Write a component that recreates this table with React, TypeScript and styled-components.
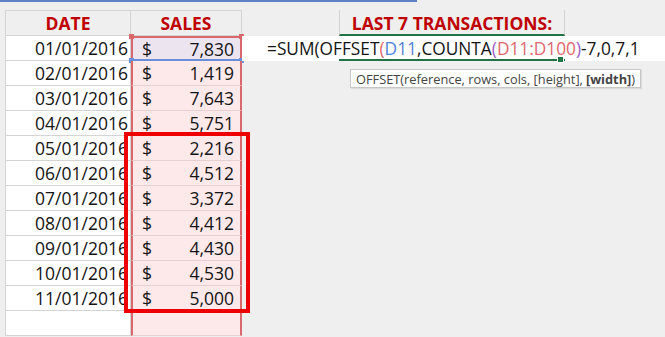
import React from 'react';
import styled, { createGlobalStyle } from 'styled-components';

const GlobalStyle = createGlobalStyle`
  html, body {
    margin: 0;
    padding: 0;
    background: #efefef;
  }
  body {
    font-family: 'Open Sans', 'Liberation Sans', sans-serif;
  }
`;

const grid = '#d4d4d4';
const rangeRed = '#d9686c';
const rangeBlue = '#6a8fd9';
const excelGreen = '#217346';

const Page = styled.div`
  position: relative;
  width: 665px;
  height: 337px;
  overflow: hidden;
  background: #efefef;
`;

const TopAccent = styled.div`
  width: 417px;
  height: 2px;
  background: #5d82c4;
`;

const Sheet = styled.div`
  display: grid;
  grid-template-columns: 126px 111px 97px 226px 1fr;
  grid-template-rows: 26px repeat(12, 25px);
  margin: 8px 0 0 5px;
  font-size: 17.5px;
  color: #141414;
`;

const Cell = styled.div`
  box-sizing: border-box;
  display: flex;
  align-items: center;
  white-space: nowrap;
  overflow: hidden;
`;

const HeadCell = styled(Cell)<{ $first?: boolean }>`
  justify-content: center;
  font-weight: 700;
  color: #c00000;
  border-top: 1px solid ${grid};
  border-bottom: 1px solid ${grid};
  border-right: 1px solid ${grid};
  border-left: ${(p) => (p.$first ? `1px solid ${grid}` : 'none')};
`;

const TitleCell = styled(Cell)`
  justify-content: center;
  font-weight: 700;
  color: #c00000;
  border-left: 1px solid ${grid};
  border-right: 1px solid ${grid};
  border-bottom: 2px solid ${excelGreen};
  padding-top: 1px;
`;

const Blank = styled.div<{ $span?: number }>`
  grid-column: span ${(p) => p.$span || 1};
`;

const DateCell = styled(Cell)`
  justify-content: flex-end;
  padding-right: 2px;
  background: #fff;
  border-left: 1px solid ${grid};
  border-right: 1px solid ${grid};
  border-bottom: 1px solid ${grid};
`;

const SalesCell = styled(Cell)<{ $active?: boolean }>`
  position: relative;
  overflow: visible;
  justify-content: space-between;
  padding: 0 6px 0 9px;
  background: ${(p) => (p.$active ? '#ece5f0' : '#fde9ea')};
  border-left: 2px solid ${rangeRed};
  border-right: 2px solid ${rangeRed};
  border-top: ${(p) => (p.$active ? `2px solid ${rangeRed}` : 'none')};
  border-bottom: ${(p) =>
    p.$active ? `2px solid ${rangeBlue}` : '1px solid #e8cfd1'};
`;

const Handle = styled.span<{ $color: string; $top?: boolean; $right?: boolean }>`
  position: absolute;
  width: 5px;
  height: 5px;
  background: ${(p) => p.$color};
  ${(p) => (p.$top ? 'top: -4px;' : 'bottom: -4px;')}
  ${(p) => (p.$right ? 'right: -4px;' : 'left: -4px;')}
`;

const FormulaCell = styled(Cell)`
  position: relative;
  z-index: 1;
  overflow: visible;
  padding-left: 25px;
  background: #fff;
  font-size: 17.3px;
`;

const ActiveCell = styled(Cell)`
  position: relative;
  background: #fff;
  border-bottom: 2px solid ${excelGreen};
  overflow: visible;
`;

const FillHandle = styled.span`
  position: absolute;
  right: 1px;
  bottom: -4px;
  width: 5px;
  height: 5px;
  background: ${excelGreen};
  border: 1px solid #fff;
`;

const WhiteCell = styled(Cell)`
  background: #fff;
`;

const Token = styled.span<{ $color?: string }>`
  color: ${(p) => p.$color || '#141414'};
`;

const Caret = styled.span`
  display: inline-block;
  width: 1px;
  height: 19px;
  margin-left: 1px;
  background: #000;
  vertical-align: middle;
`;

const Tooltip = styled.div`
  position: absolute;
  left: 350px;
  top: 69px;
  box-sizing: border-box;
  height: 19px;
  padding: 0 5px;
  display: flex;
  align-items: center;
  background: #fff;
  border: 1px solid #c6c6c6;
  box-shadow: 1px 1px 1px rgba(0, 0, 0, 0.08);
  font-size: 12.8px;
  color: #444;
  white-space: nowrap;

  b {
    font-weight: 700;
    margin-left: 3px;
  }
`;

const Callout = styled.div`
  position: absolute;
  left: 124px;
  top: 132px;
  width: 126px;
  height: 181px;
  box-sizing: border-box;
  border: 4px solid #ee0000;
`;

const rows: [string, string][] = [
  ['01/01/2016', '7,830'],
  ['02/01/2016', '1,419'],
  ['03/01/2016', '7,643'],
  ['04/01/2016', '5,751'],
  ['05/01/2016', '2,216'],
  ['06/01/2016', '4,512'],
  ['07/01/2016', '3,372'],
  ['08/01/2016', '4,412'],
  ['09/01/2016', '4,430'],
  ['10/01/2016', '4,530'],
  ['11/01/2016', '5,000'],
  ['', ''],
];

const Formula: React.FC = () => (
  <>
    <Token>=SUM(OFFSET</Token>
    <Token $color="#e0686c">(</Token>
    <Token $color="#4f7fd6">D11</Token>
    <Token>,COUNTA</Token>
    <Token $color="#9b5bc9">(</Token>
    <Token $color="#e0686c">D11:D100</Token>
    <Token $color="#9b5bc9">)</Token>
    <Token>-7,0,7,1</Token>
    <Caret />
  </>
);

const App: React.FC = () => {
  return (
    <Page>
      <GlobalStyle />
      <TopAccent />
      <Sheet>
        <HeadCell $first>DATE</HeadCell>
        <HeadCell>SALES</HeadCell>
        <Blank />
        <TitleCell>LAST 7 TRANSACTIONS:</TitleCell>
        <Blank />

        {rows.map(([date, amount], index) => (
          <React.Fragment key={index}>
            <DateCell>{date}</DateCell>
            <SalesCell $active={index === 0}>
              {amount && (
                <>
                  <span>$</span>
                  <span>{amount}</span>
                </>
              )}
              {index === 0 && (
                <>
                  <Handle $color={rangeRed} $top />
                  <Handle $color={rangeRed} $top $right />
                  <Handle $color={rangeBlue} />
                  <Handle $color={rangeBlue} $right />
                </>
              )}
            </SalesCell>
            {index === 0 ? (
              <>
                <FormulaCell>
                  <Formula />
                </FormulaCell>
                <ActiveCell>
                  <FillHandle />
                </ActiveCell>
                <WhiteCell />
              </>
            ) : (
              <Blank $span={3} />
            )}
          </React.Fragment>
        ))}
      </Sheet>

      <Tooltip>
        OFFSET(reference, rows, cols, [height], <b>[width]</b>)
      </Tooltip>
      <Callout />
    </Page>
  );
};

export default App;
